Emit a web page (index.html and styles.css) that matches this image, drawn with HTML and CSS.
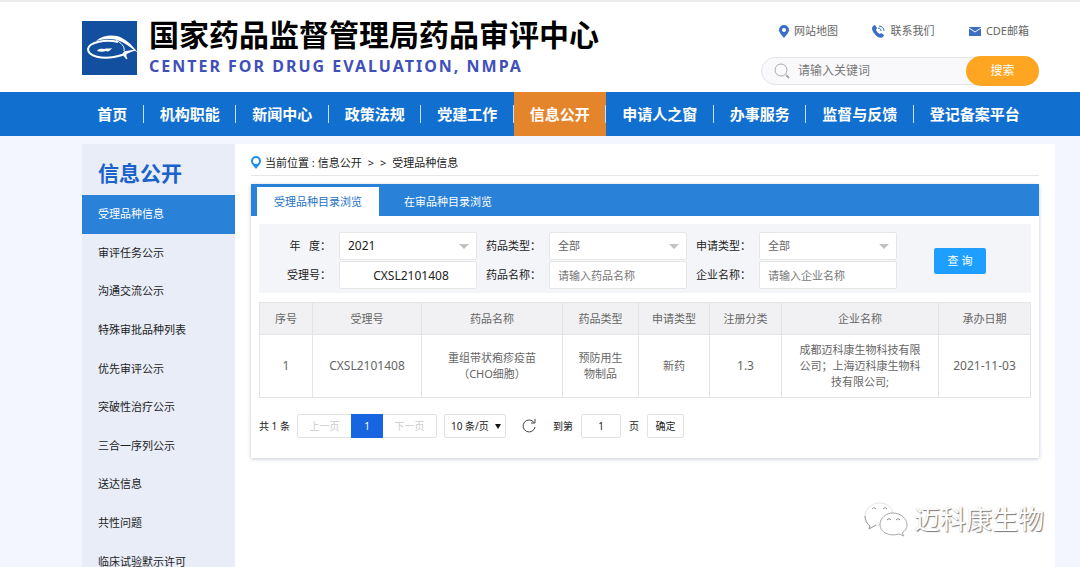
FILE: index.html
```html
<!DOCTYPE html>
<html lang="zh-CN">
<head>
<meta charset="utf-8">
<title>国家药品监督管理局药品审评中心</title>
<link rel="stylesheet" href="styles.css">
</head>
<body>
<header class="header">
  <a class="brand" href="#">
    <svg class="logo" viewBox="0 0 56 54" aria-hidden="true">
      <rect width="55" height="54" fill="#134f9f"/>
      <path d="M14 20C21 14 32 13 40 17C46 20 51 25 56 32C48 26 42 21 35 19C28 17 21 18 14 20Z" fill="#fff"/>
      <path d="M36 21C24 18 7 21 6 28C6 36 21 38 32 36C38 35 43 33 45 31" fill="none" stroke="#fff" stroke-width="2"/>
      <path d="M34 19C39 22 43 25 42 30" fill="none" stroke="#fff"/>
      <path d="M42 31C45 30 49 30 53 29C48 31 45 32 44 33C44 35 44 36 45 38C42 36 41 34 42 31Z" fill="#fff" stroke="#fff"/>
      <path d="M15 30C17 27 20 28 22 28C25 27 27 28 30 27C28 30 26 31 24 30C21 31 18 31 15 30Z" fill="#fff"/>
    </svg>
    <span class="brand-text">
      <span class="brand-name">国家药品监督管理局药品审评中心</span>
      <span class="brand-en">CENTER FOR DRUG EVALUATION, NMPA</span>
    </span>
  </a>
  <div class="tools">
    <div class="quick-links">
      <a href="#"><svg width="10" height="13" viewBox="0 0 10 13"><path fill="#3a6fc4" fill-rule="evenodd" d="M5 0a5 5 0 0 1 5 5c0 3-3 5-5 8C3 10 0 8 0 5a5 5 0 0 1 5-5Zm0 3a2 2 0 1 0 0 4 2 2 0 0 0 0-4Z"/></svg>网站地图</a>
      <a href="#"><svg width="13" height="13" viewBox="0 0 13 13"><path fill="#3a6fc4" d="M1 1l2-1 2 3-1 2c1 2 2 3 4 4l1-1 3 2-1 2c-1 1-3 1-5 0C3 10 0 6 0 3Z"/><path d="M6 3c2 0 3 1 3 3M7 1c3 0 5 2 5 5" fill="none" stroke="#3a6fc4"/></svg>联系我们</a>
      <a href="#"><svg width="12" height="9" viewBox="0 0 12 9"><rect width="12" height="9" fill="#3a6fc4"/><path d="M0 1l6 4 6-4" fill="none" stroke="#fff"/></svg>CDE邮箱</a>
    </div>
    <form class="search">
      <svg width="16" height="16" viewBox="0 0 16 16" fill="none" stroke="#aaa"><circle cx="7" cy="7" r="6"/><path d="M12 12l3 3" stroke-width="2"/></svg>
      <input type="text" placeholder="请输入关键词" aria-label="请输入关键词">
      <button type="button">搜索</button>
    </form>
  </div>
</header>
<nav class="nav">
  <a href="#">首页</a><a href="#">机构职能</a><a href="#">新闻中心</a><a href="#">政策法规</a><a href="#">党建工作</a><a class="current" href="#">信息公开</a><a href="#">申请人之窗</a><a href="#">办事服务</a><a href="#">监督与反馈</a><a href="#">登记备案平台</a>
</nav>
<div class="page">
  <aside class="sidebar">
    <h2>信息公开</h2>
    <ul>
      <li class="active"><a href="#">受理品种信息</a></li>
      <li><a href="#">审评任务公示</a></li>
      <li><a href="#">沟通交流公示</a></li>
      <li><a href="#">特殊审批品种列表</a></li>
      <li><a href="#">优先审评公示</a></li>
      <li><a href="#">突破性治疗公示</a></li>
      <li><a href="#">三合一序列公示</a></li>
      <li><a href="#">送达信息</a></li>
      <li><a href="#">共性问题</a></li>
      <li><a href="#">临床试验默示许可</a></li>
    </ul>
  </aside>
  <main class="main">
    <div class="crumbs">
      <svg width="10" height="13" viewBox="0 0 10 13"><path fill="#1e8fe6" fill-rule="evenodd" d="M5 0a5 5 0 0 1 5 5c0 3-3 5-5 8C3 10 0 8 0 5a5 5 0 0 1 5-5Zm0 2a3 3 0 1 0 0 6 3 3 0 0 0 0-6Z"/></svg>
      <span>当前位置 : <a href="#">信息公开</a></span><span>&gt;</span><span>&gt;</span><a href="#">受理品种信息</a>
    </div>
    <section class="panel">
      <div class="tabs">
        <button class="tab selected" type="button">受理品种目录浏览</button>
        <button class="tab" type="button">在审品种目录浏览</button>
      </div>
      <form class="filter">
        <div class="fields">
          <label for="year">年&nbsp;&nbsp; 度：</label>
          <span class="pick"><select id="year" class="chosen"><option>2021</option></select></span>
          <label for="dtype">药品类型：</label>
          <span class="pick"><select id="dtype"><option>全部</option></select></span>
          <label for="atype">申请类型：</label>
          <span class="pick"><select id="atype"><option>全部</option></select></span>
          <label for="accept">受理号：</label>
          <input id="accept" class="number" type="text" value="CXSL2101408">
          <label for="dname">药品名称：</label>
          <input id="dname" type="text" placeholder="请输入药品名称">
          <label for="corp">企业名称：</label>
          <input id="corp" type="text" placeholder="请输入企业名称">
        </div>
        <button class="query" type="button">查 询</button>
      </form>
      <table class="grid">
        <colgroup><col class="c-index"><col class="c-accept"><col class="c-name"><col class="c-type"><col class="c-apply"><col class="c-class"><col class="c-corp"><col class="c-date"></colgroup>
        <thead><tr><th>序号</th><th>受理号</th><th>药品名称</th><th>药品类型</th><th>申请类型</th><th>注册分类</th><th>企业名称</th><th>承办日期</th></tr></thead>
        <tbody><tr><td class="num">1</td><td class="num">CXSL2101408</td><td>重组带状疱疹疫苗<br>（CHO细胞）</td><td>预防用生物制品</td><td>新药</td><td class="num">1.3</td><td>成都迈科康生物科技有限公司；上海迈科康生物科技有限公司;</td><td class="num">2021-11-03</td></tr></tbody>
      </table>
      <div class="pager">
        <span class="total">共 1 条</span>
        <div class="pages"><button type="button" disabled>上一页</button><button class="on" type="button">1</button><button type="button" disabled>下一页</button></div>
        <span class="pick dark"><select class="size" aria-label="每页条数"><option>10 条/页</option></select></span>
        <button class="reload" type="button" aria-label="刷新"><svg width="15" height="14" viewBox="0 0 15 14" fill="none" stroke="#444"><path d="M12 3.500A6 6 0 1 0 13 8M13 0v4H9"/></svg></button>
        <label for="goto">到第</label>
        <input id="goto" type="text" value="1">
        <span class="unit">页</span>
        <button class="go" type="button">确定</button>
      </div>
    </section>
  </main>
</div>
<div class="watermark">
  <svg width="44" height="36" viewBox="0 0 44 36" fill="#fff" stroke="#aaa">
    <path d="M6 25C2 22 1 18 1 15C1 8 8 2 15 2C23 2 28 6 29 12C22 12 16 17 16 24L12 24L5 28Z" stroke="#e4e4e4"/>
    <path d="M1 15C1 19 3 23 6 25L5 28L12 24M8 8q2-3 4 0M19 8q2-3 4 0" stroke="#999" fill="none"/>
    <path d="M29 12C37 12 43 18 43 24C43 28 41 30 38 32L40 35L35 33C25 36 16 31 16 24C16 17 22 12 29 12Z"/>
    <path d="M23 19q2-3 4 0M32 19q2-3 4 0" fill="none" stroke="#888"/>
  </svg>
  <span>迈科康生物</span>
</div>
</body>
</html>
```
FILE: styles.css
```css
* { box-sizing: border-box; }

body {
  margin: 0;
  height: 100vh;
  overflow: hidden;
  display: flex;
  flex-direction: column;
  position: relative;
  background: #f3f6fe;
  color: #222;
  font-family: "Noto Sans", "Noto Sans CJK SC", sans-serif;
  font-size: 11px;
  line-height: 16px;
}

a { color: inherit; text-decoration: none; }

button, input, select {
  font: inherit;
  color: inherit;
  margin: 0;
  padding: 0;
  border: 0;
  border-radius: 0;
  background: none;
}

input, select { min-width: 0; outline: 0; }
input::placeholder { color: #777; opacity: 1; }

/* Header */
.header {
  flex: none;
  height: 92px;
  display: flex;
  justify-content: space-between;
  padding: 19px 41px 0 82px;
  background: #fff;
  border-top: 2px solid #ececee;
}

.brand { display: flex; gap: 11px; }
.logo { width: 56px; height: 54px; flex: none; }
.brand-text { display: flex; flex-direction: column; white-space: nowrap; margin-top: -7px; }
.brand-name { font-size: 30px; line-height: 42px; font-weight: 700; color: #000; }
.brand-en { font-size: 16px; line-height: 20px; font-weight: 700; letter-spacing: 2px; color: #4150b8; }

.tools { display: flex; flex-direction: column; gap: 18px; width: 278px; }
.quick-links { display: flex; justify-content: space-between; padding: 2px 10px 0 18px; color: #666; }
.quick-links a { display: flex; align-items: center; gap: 5px; }

.search {
  display: flex;
  align-items: center;
  height: 28px;
  padding-left: 12px;
  background: #f9f9fc;
  border: 1px solid #e3e3e8;
  border-radius: 14px;
}
.search svg { flex: none; }
.search input { flex: 1; padding-left: 8px; font-size: 12px; }
.search button {
  flex: none;
  width: 73px;
  height: 30px;
  margin-right: -1px;
  border-radius: 15px;
  background: #fea621;
  color: #fff;
  font-size: 12px;
}

/* Navigation */
.nav {
  flex: none;
  display: flex;
  height: 44px;
  padding: 0 44px 0 81px;
  background: #116fd0;
  color: #fff;
  font-size: 15px;
  font-weight: 700;
}
.nav a {
  flex: 1 0 auto;
  display: flex;
  align-items: center;
  justify-content: center;
  background: linear-gradient(#c5e0fa, #c5e0fa) right center / 1px 18px no-repeat;
}
.nav a:last-child { background: none; }
.nav .current { background-color: #e5852b; }

/* Page body */
.page { flex: 1; min-height: 0; display: flex; margin: 8px 25px 0 82px; }

.sidebar { flex: none; width: 153px; background: #e8edf8; }
.sidebar h2 {
  margin: 0;
  padding: 13px 16px 6px;
  font-size: 21px;
  line-height: 32px;
  color: #1b63c8;
}
.sidebar ul {
  margin: 0;
  padding: 0;
  list-style: none;
  display: grid;
  grid-template-rows: repeat(10, 1fr);
  height: 386px;
}
.sidebar a { display: flex; align-items: center; height: 100%; padding: 0 16px; }
.sidebar .active { background: #2a82d8; color: #fff; }

.main { flex: 1; min-width: 0; padding: 0 16px; background: #fff; }

.crumbs {
  display: flex;
  align-items: center;
  gap: 6px;
  height: 32px;
  padding-top: 6px;
  border-bottom: 1px solid #e4e6ea;
}
.crumbs svg { margin-right: -2px; }

.panel { margin-top: 8px; padding-bottom: 20px; box-shadow: 0 1px 4px #c4cad2; }

.tabs { display: flex; height: 32px; padding: 3px 6px 0; background: #2a82d8; color: #fff; }
.tab { padding: 0 16px; min-width: 122px; }
.tab + .tab { margin-left: 8px; }
.tab.selected { background: #fff; color: #2372c6; }

.filter {
  display: flex;
  align-items: center;
  gap: 37px;
  margin: 8px 8px 9px;
  padding: 8px 45px 4px 0;
  background: #f4f5f8;
}
.fields {
  flex: 1;
  display: grid;
  grid-template-columns: 80px 1fr 72px 1fr 72px 1fr;
  gap: 1px 0;
  align-items: center;
}
.fields label { text-align: right; padding-right: 8px; white-space: nowrap; }
.fields input, .fields select {
  width: 100%;
  height: 28px;
  padding: 0 8px;
  border: 1px solid #e6e6e6;
  border-radius: 2px;
  background: #fff;
}
.fields select { color: #666; }
.fields .chosen { color: #222; font-size: 12px; }
.fields .number { text-align: center; padding-left: 14px; font-size: 12px; }

.pick { position: relative; display: block; }
.pick select { appearance: none; display: block; }
.pick::after {
  content: "";
  position: absolute;
  right: 8px;
  top: 50%;
  margin-top: -2px;
  border: 5px solid transparent;
  border-top-color: #c2c2c2;
  border-bottom: 0;
  pointer-events: none;
}

.query {
  flex: none;
  width: 52px;
  height: 26px;
  margin-top: 1px;
  border-radius: 2px;
  background: #1e9fff;
  color: #fff;
}

/* Results */
.grid {
  width: calc(100% - 16px);
  margin: 0 8px;
  border-collapse: collapse;
  table-layout: fixed;
  color: #666;
  text-align: center;
}
.grid th, .grid td { border: 1px solid #e4e4e6; padding: 0 13px; font-weight: 400; }
.grid th { height: 32px; padding: 0; background: #f1f1f3; }
.grid td { height: 63px; }
.grid .num { padding: 0; font-size: 12px; }
.c-index { width: 53px; }
.c-accept { width: 109px; }
.c-name { width: 141px; }
.c-type { width: 76px; }
.c-apply { width: 71px; }
.c-class { width: 72px; }
.c-date { width: 92px; }

/* Pagination */
.pager { display: flex; align-items: center; height: 24px; margin: 16px 8px 0; font-size: 10px; }
.total { width: 38px; white-space: nowrap; }
.pages { display: flex; height: 24px; border: 1px solid #e2e2e2; border-radius: 2px; }
.pages button { width: 53px; color: #ccc; }
.pages .on { width: 32px; margin: -1px 0; background: #1765e0; color: #fff; }
.pager .pick { margin-left: 7px; }
.size { width: 62px; height: 24px; padding-left: 6px; border: 1px solid #e2e2e2; border-radius: 2px; }
.pick.dark::after { right: 5px; border-width: 5px 3px 0; border-top-color: #111; }
.reload { display: flex; margin: 0 16px; }
.pager input { width: 40px; height: 24px; margin: 0 8px; text-align: center; border: 1px solid #e2e2e2; border-radius: 2px; }
.unit { margin-right: 8px; }
.go { width: 37px; height: 24px; border: 1px solid #e2e2e2; border-radius: 2px; }

/* Watermark over the page */
.watermark {
  position: absolute;
  right: 36px;
  bottom: 30px;
  display: flex;
  align-items: center;
  gap: 6px;
  font-size: 26px;
  line-height: 36px;
  color: #fff;
  text-shadow: 1px 1px 1px #777, 0 0 1px #ccc;
}
```
